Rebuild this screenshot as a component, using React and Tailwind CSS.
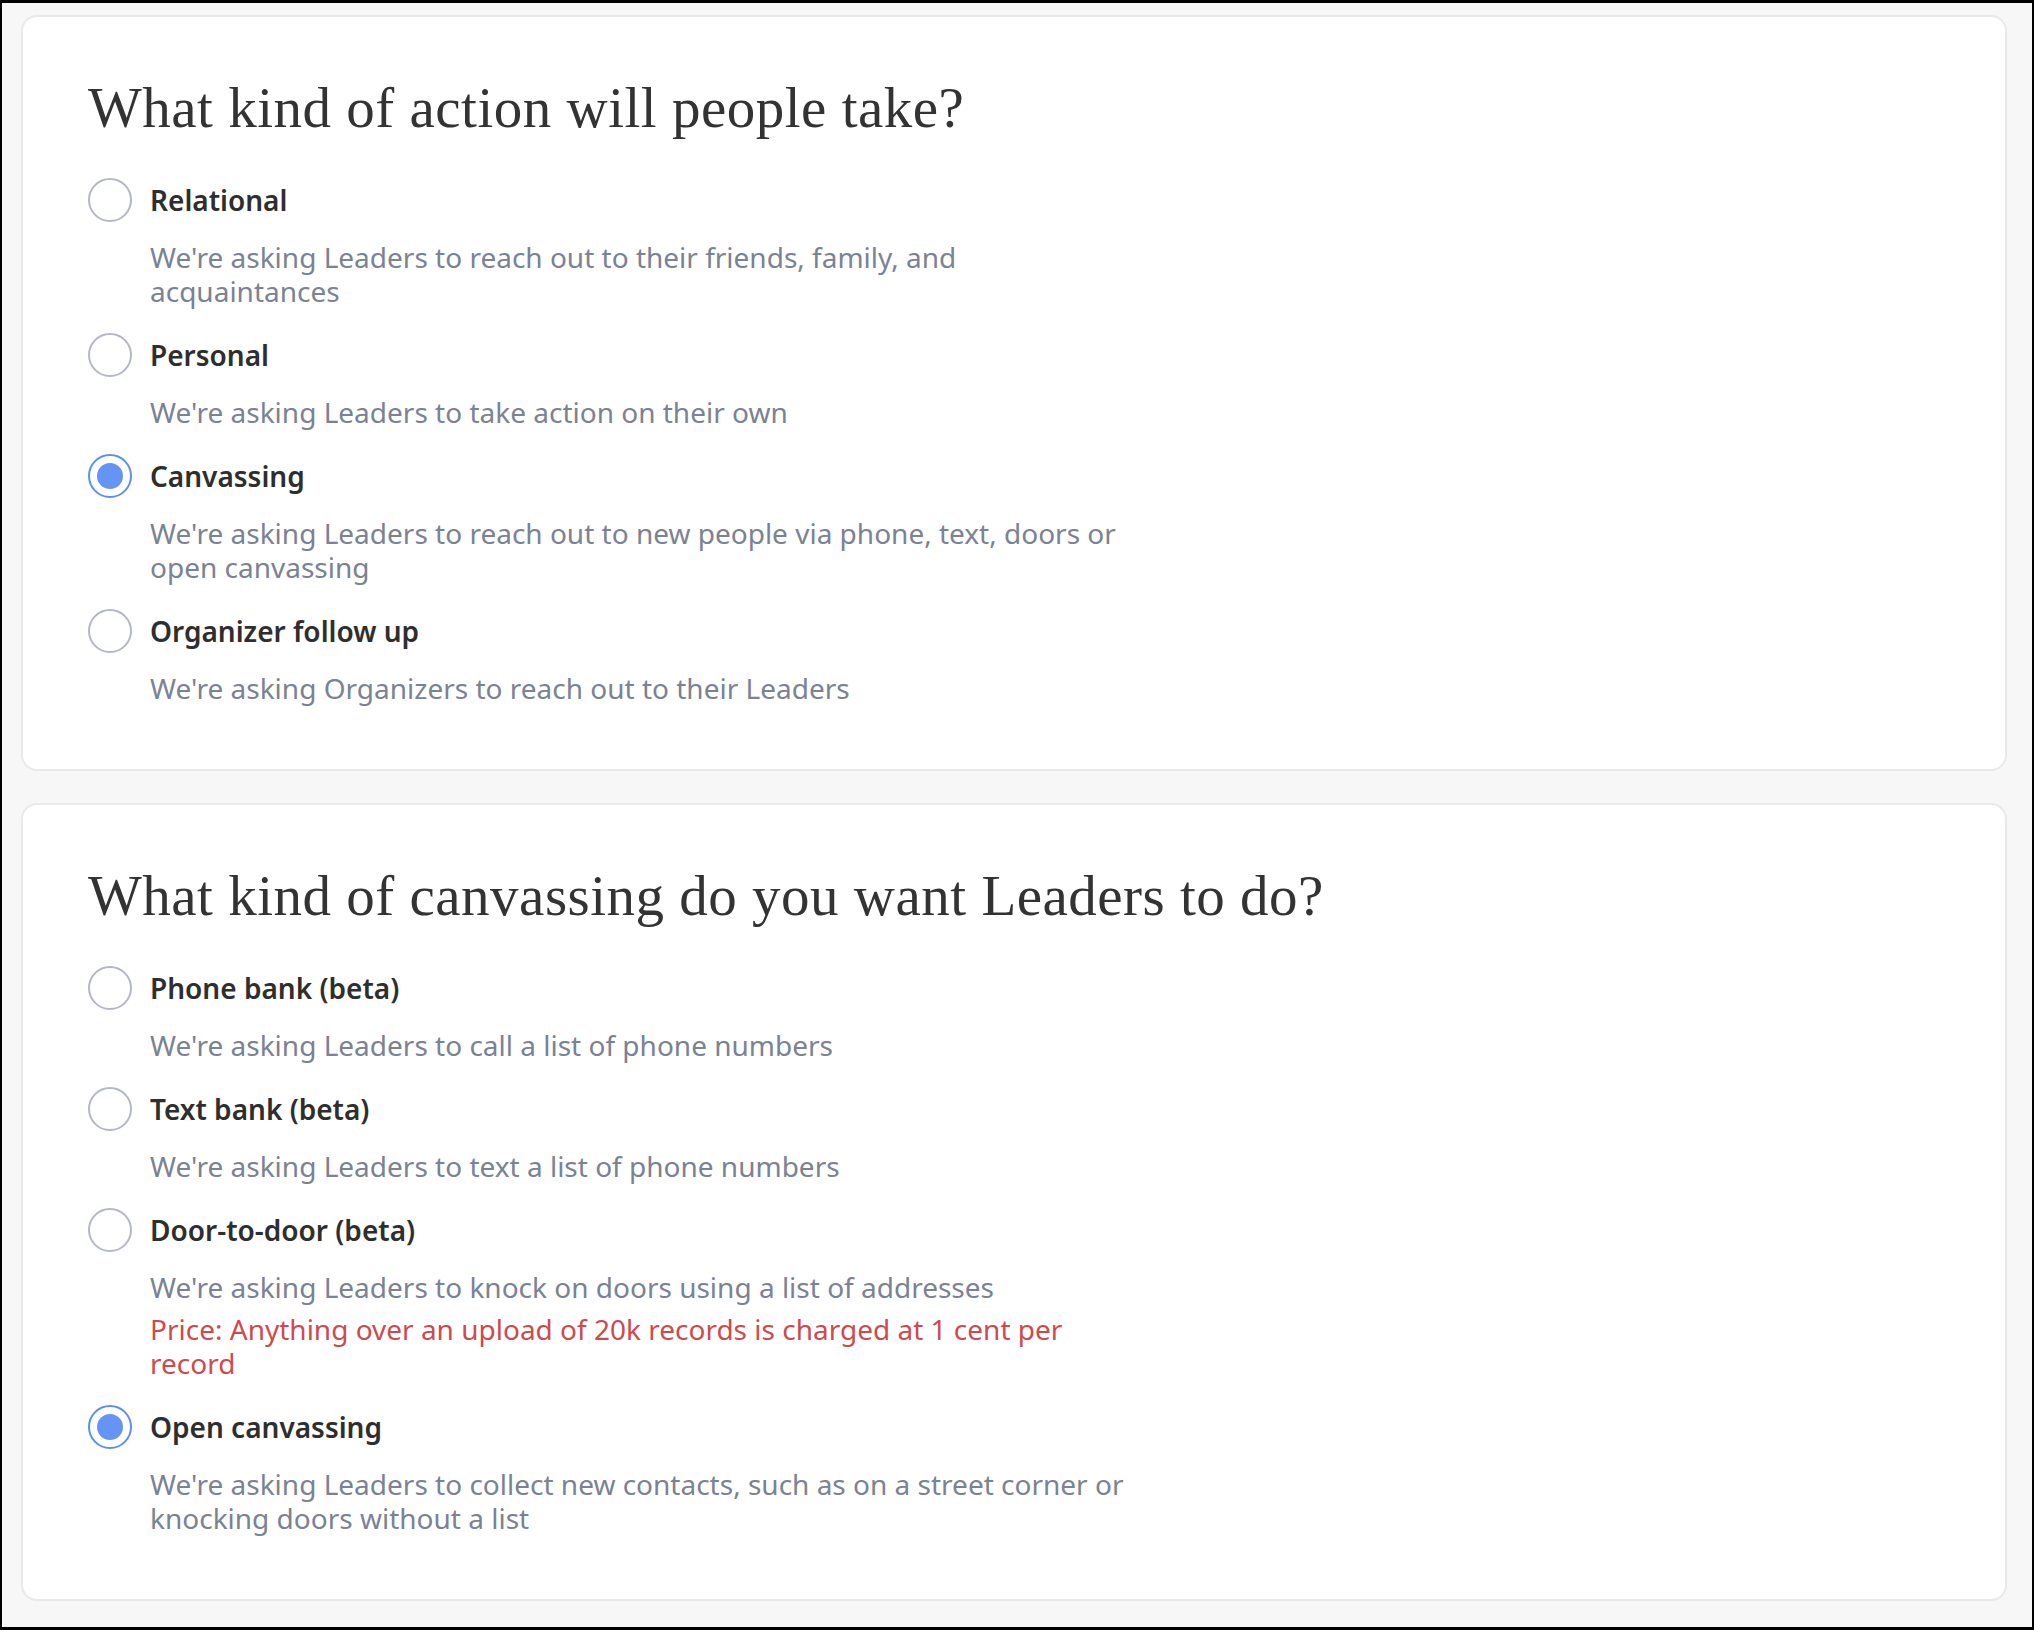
import { useState } from "react";

const actionOptions = [
  {
    id: "relational",
    label: "Relational",
    desc: "We're asking Leaders to reach out to their friends, family, and acquaintances",
  },
  {
    id: "personal",
    label: "Personal",
    desc: "We're asking Leaders to take action on their own",
  },
  {
    id: "canvassing",
    label: "Canvassing",
    desc: "We're asking Leaders to reach out to new people via phone, text, doors or open canvassing",
  },
  {
    id: "organizer",
    label: "Organizer follow up",
    desc: "We're asking Organizers to reach out to their Leaders",
  },
];

const canvassOptions = [
  {
    id: "phone",
    label: "Phone bank (beta)",
    desc: "We're asking Leaders to call a list of phone numbers",
  },
  {
    id: "text",
    label: "Text bank (beta)",
    desc: "We're asking Leaders to text a list of phone numbers",
  },
  {
    id: "door",
    label: "Door-to-door (beta)",
    desc: "We're asking Leaders to knock on doors using a list of addresses",
    price: "Price: Anything over an upload of 20k records is charged at 1 cent per record",
  },
  {
    id: "open",
    label: "Open canvassing",
    desc: "We're asking Leaders to collect new contacts, such as on a street corner or knocking doors without a list",
  },
];

function Radio({ checked }) {
  return (
    <span
      className={
        checked
          ? "flex h-[44px] w-[44px] shrink-0 items-center justify-center rounded-full border-2 border-[#5d8ff1] bg-white"
          : "flex h-[44px] w-[44px] shrink-0 items-center justify-center rounded-full border-2 border-[#b3b8c3] bg-white"
      }
    >
      {checked && <span className="h-[26px] w-[26px] rounded-full bg-[#6595f4]" />}
    </span>
  );
}

function OptionGroup({ title, options, value, onChange }) {
  return (
    <section className="rounded-[16px] border-2 border-[#e8e8ed] bg-white pl-[65px] pr-10 pt-[61px] pb-[64px]">
      <h2 className="font-['Liberation_Serif',serif] text-[57px] leading-[60px] font-normal tracking-[0.5px] text-[#333333]">
        {title}
      </h2>
      <div className="mt-[40px] flex flex-col gap-[25px]">
        {options.map((o) => (
          <label key={o.id} className="block cursor-pointer">
            <div className="flex items-center gap-[18px]" onClick={() => onChange(o.id)}>
              <Radio checked={value === o.id} />
              <span className="text-[28px] font-semibold leading-[34px] text-[#2e2e2e]">
                {o.label}
              </span>
            </div>
            <p className="ml-[62px] mt-[18px] max-w-[985px] text-[28px] leading-[34px] text-[#7b8294]">
              {o.desc}
            </p>
            {o.price && (
              <p className="ml-[62px] mt-[8px] max-w-[985px] text-[28px] leading-[34px] text-[#cf4a4f]">
                {o.price}
              </p>
            )}
          </label>
        ))}
      </div>
    </section>
  );
}

export default function App() {
  const [action, setAction] = useState("canvassing");
  const [canvass, setCanvass] = useState("open");

  return (
    <div className="h-[1630px] border-t-[3px] border-b-[3px] border-x-[2px] border-black bg-[#f7f7f8] pl-[19px] pr-[25px] pt-[12px] font-['Noto_Sans',sans-serif]">
      <OptionGroup
        title="What kind of action will people take?"
        options={actionOptions}
        value={action}
        onChange={setAction}
      />
      <div className="mt-[32px]">
        <OptionGroup
          title="What kind of canvassing do you want Leaders to do?"
          options={canvassOptions}
          value={canvass}
          onChange={setCanvass}
        />
      </div>
    </div>
  );
}
